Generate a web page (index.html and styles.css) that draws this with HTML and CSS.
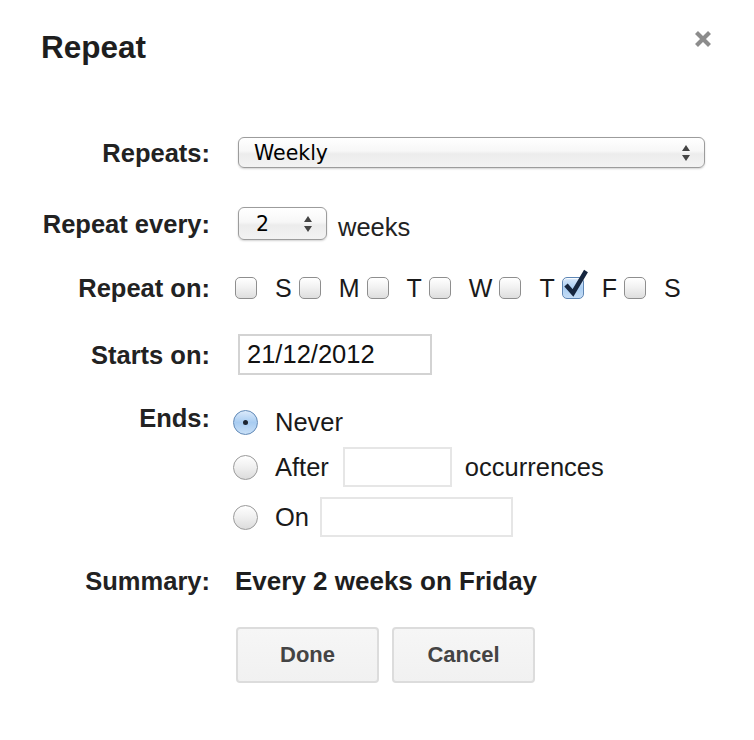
FILE: index.html
```html
<!DOCTYPE html>
<html lang="en">
<head>
    <meta charset="UTF-8">
    <meta name="viewport" content="width=device-width, initial-scale=1.0">
    <title>Repeat</title>
    <link rel="stylesheet" href="styles.css">
</head>
<body>
    <div class="dialog">
        <div class="header">
            <h1 class="title">Repeat</h1>
            <span class="close">
                <svg width="18" height="18" viewBox="0 0 18 18">
                    <path d="M2.5 2.5 L15.5 15.5 M15.5 2.5 L2.5 15.5" stroke="#8c8c8c" stroke-width="4.2" stroke-linecap="butt" fill="none"/>
                </svg>
            </span>
        </div>

        <div class="form">
            <div class="row row-repeats">
                <div class="label">Repeats:</div>
                <div class="field">
                    <div class="select select-wide">
                        <span>Weekly</span>
                        <svg class="arrows" width="8" height="16" viewBox="0 0 8 16">
                            <path d="M4 0 L8 6 L0 6 Z M0 10 L8 10 L4 16 Z" fill="#444"/>
                        </svg>
                    </div>
                </div>
            </div>

            <div class="row row-every">
                <div class="label">Repeat every:</div>
                <div class="field">
                    <div class="select select-small">
                        <span>2</span>
                        <svg class="arrows" width="8" height="16" viewBox="0 0 8 16">
                            <path d="M4 0 L8 6 L0 6 Z M0 10 L8 10 L4 16 Z" fill="#444"/>
                        </svg>
                    </div>
                    <span class="unit">weeks</span>
                </div>
            </div>

            <div class="row row-on">
                <div class="label">Repeat on:</div>
                <div class="field days">
                    <span class="checkbox"></span><span class="day">S</span>
                    <span class="checkbox"></span><span class="day">M</span>
                    <span class="checkbox"></span><span class="day">T</span>
                    <span class="checkbox"></span><span class="day">W</span>
                    <span class="checkbox"></span><span class="day">T</span>
                    <span class="checkbox checked">
                        <svg class="tick" width="26" height="30" viewBox="0 0 26 30">
                            <path d="M3 17 L10 25 L23 3" stroke="#16263f" stroke-width="4.5" fill="none" stroke-linejoin="miter"/>
                        </svg>
                    </span><span class="day">F</span>
                    <span class="checkbox"></span><span class="day">S</span>
                </div>
            </div>

            <div class="row row-starts">
                <div class="label">Starts on:</div>
                <div class="field">
                    <div class="input input-date">21/12/2012</div>
                </div>
            </div>

            <div class="row row-ends">
                <div class="label">Ends:</div>
                <div class="field options">
                    <div class="option option-never">
                        <span class="radio selected"></span>
                        <span class="option-text">Never</span>
                    </div>
                    <div class="option">
                        <span class="radio"></span>
                        <span class="option-text text-after">After</span>
                        <div class="input input-count"></div>
                        <span class="option-text">occurrences</span>
                    </div>
                    <div class="option">
                        <span class="radio"></span>
                        <span class="option-text text-on">On</span>
                        <div class="input input-until"></div>
                    </div>
                </div>
            </div>

            <div class="row row-summary">
                <div class="label">Summary:</div>
                <div class="field summary">Every 2 weeks on Friday</div>
            </div>

            <div class="actions">
                <button class="button">Done</button>
                <button class="button">Cancel</button>
            </div>
        </div>
    </div>
</body>
</html>
```

FILE: styles.css
```css
body {
    margin: 0;
    background: #fff;
    font-family: 'Liberation Sans', Arial, sans-serif;
    color: #222;
}
.dialog {
    width: 754px;
    height: 740px;
}
.header {
    display: flex;
    justify-content: space-between;
    padding: 29px 42px 0 41px;
}
.title {
    margin: 0;
    font-size: 31.5px;
    line-height: 36px;
    font-weight: bold;
    color: #1e1e1e;
}
.close {
    margin-top: 1px;
    width: 18px;
    height: 18px;
}
.close svg {
    display: block;
}
.row {
    display: flex;
    align-items: center;
}
.label {
    flex: none;
    width: 210px;
    text-align: right;
    font-size: 25.5px;
    font-weight: bold;
    line-height: 28px;
    color: #222;
}
.field {
    display: flex;
    align-items: center;
    margin-left: 28px;
}
.row-repeats {
    margin-top: 72px;
    height: 31px;
}
.row-every {
    margin-top: 39px;
    height: 33px;
}
.row-on {
    margin-top: 37px;
    height: 22px;
}
.row-starts {
    margin-top: 35px;
    height: 41px;
}
.row-ends {
    margin-top: 28px;
    align-items: flex-start;
}
.row-ends .label {
    line-height: 30px;
}
.row-summary {
    margin-top: 29px;
}
.row-summary .label {
    line-height: 30px;
}

/* selects */
.select {
    box-sizing: border-box;
    display: flex;
    align-items: center;
    justify-content: space-between;
    border: 1px solid #9c9c9c;
    border-radius: 6px;
    background: linear-gradient(#ffffff, #f7f7f7 45%, #ececec 55%, #f3f3f3);
    box-shadow: 0 1px 2px rgba(0, 0, 0, 0.18);
    font-family: 'DejaVu Sans', Verdana, sans-serif;
    font-size: 20.5px;
    color: #000;
}
.select-wide {
    width: 467px;
    height: 31px;
    padding: 0 14px 0 15px;
}
.select-small {
    width: 89px;
    height: 33px;
    padding: 0 14px 0 17px;
}
.arrows {
    display: block;
}
.unit {
    margin-left: 11px;
    padding-top: 8px;
    font-size: 25.5px;
    color: #222;
}

/* checkboxes */
.days {
    margin-left: 25px;
}
.checkbox {
    position: relative;
    box-sizing: border-box;
    width: 22px;
    height: 22px;
    border: 1px solid #8e8e8e;
    border-radius: 5px;
    background: linear-gradient(#ffffff, #f0f0f0 50%, #dedede);
    box-shadow: inset 0 1px 1px rgba(255, 255, 255, 0.9);
}
.checkbox.checked {
    border-color: #5e86b4;
    background: linear-gradient(#d9e9fb, #a9cdf2 50%, #c5ddf6);
}
.tick {
    position: absolute;
    left: 0;
    top: -10px;
}
.day {
    margin: 0 7px 0 18px;
    font-size: 25px;
    color: #1a1a1a;
}

/* text inputs */
.input {
    box-sizing: border-box;
    border: 2px solid #d3d3d3;
    background: #fff;
}
.input-date {
    width: 194px;
    height: 41px;
    padding-left: 7px;
    font-size: 25.5px;
    line-height: 37px;
    color: #111;
}
.input-count {
    width: 109px;
    height: 40px;
    border-color: #e6e6e6;
    margin-right: 13px;
}
.input-until {
    width: 193px;
    height: 40px;
    border-color: #e6e6e6;
}

/* radios */
.options {
    flex-direction: column;
    align-items: flex-start;
    gap: 10px;
    margin-top: 4px;
}
.option {
    display: flex;
    align-items: center;
    height: 40px;
}
.option-never {
    height: 30px;
}
.radio {
    position: relative;
    box-sizing: border-box;
    width: 25px;
    height: 25px;
    margin-left: -5px;
    border: 1px solid #9a9a9a;
    border-radius: 50%;
    background: linear-gradient(#ffffff, #efefef 50%, #dcdcdc);
}
.radio.selected {
    border-color: #6189b6;
    background: linear-gradient(#dbeafb, #a8ccf1 50%, #c9e0f7);
}
.radio.selected::after {
    content: "";
    position: absolute;
    left: 9px;
    top: 9px;
    width: 5px;
    height: 5px;
    border-radius: 50%;
    background: #1c2430;
}
.option-text {
    margin-left: 17px;
    font-size: 25.5px;
    line-height: 30px;
    color: #1a1a1a;
}
.text-after {
    margin-right: 14px;
}
.text-on {
    margin-right: 11px;
}
.input-count + .option-text {
    margin-left: 0;
}

.summary {
    font-size: 26px;
    font-weight: bold;
    line-height: 30px;
    margin-left: 25px;
    color: #1e1e1e;
}

/* buttons */
.actions {
    display: flex;
    gap: 13px;
    margin: 31px 0 0 236px;
}
.button {
    box-sizing: border-box;
    width: 143px;
    height: 56px;
    border: 2px solid #dcdcdc;
    border-radius: 4px;
    background: linear-gradient(#f6f6f6, #f1f1f1);
    font-family: 'Liberation Sans', Arial, sans-serif;
    font-size: 22px;
    font-weight: bold;
    color: #444;
    cursor: pointer;
}
```
